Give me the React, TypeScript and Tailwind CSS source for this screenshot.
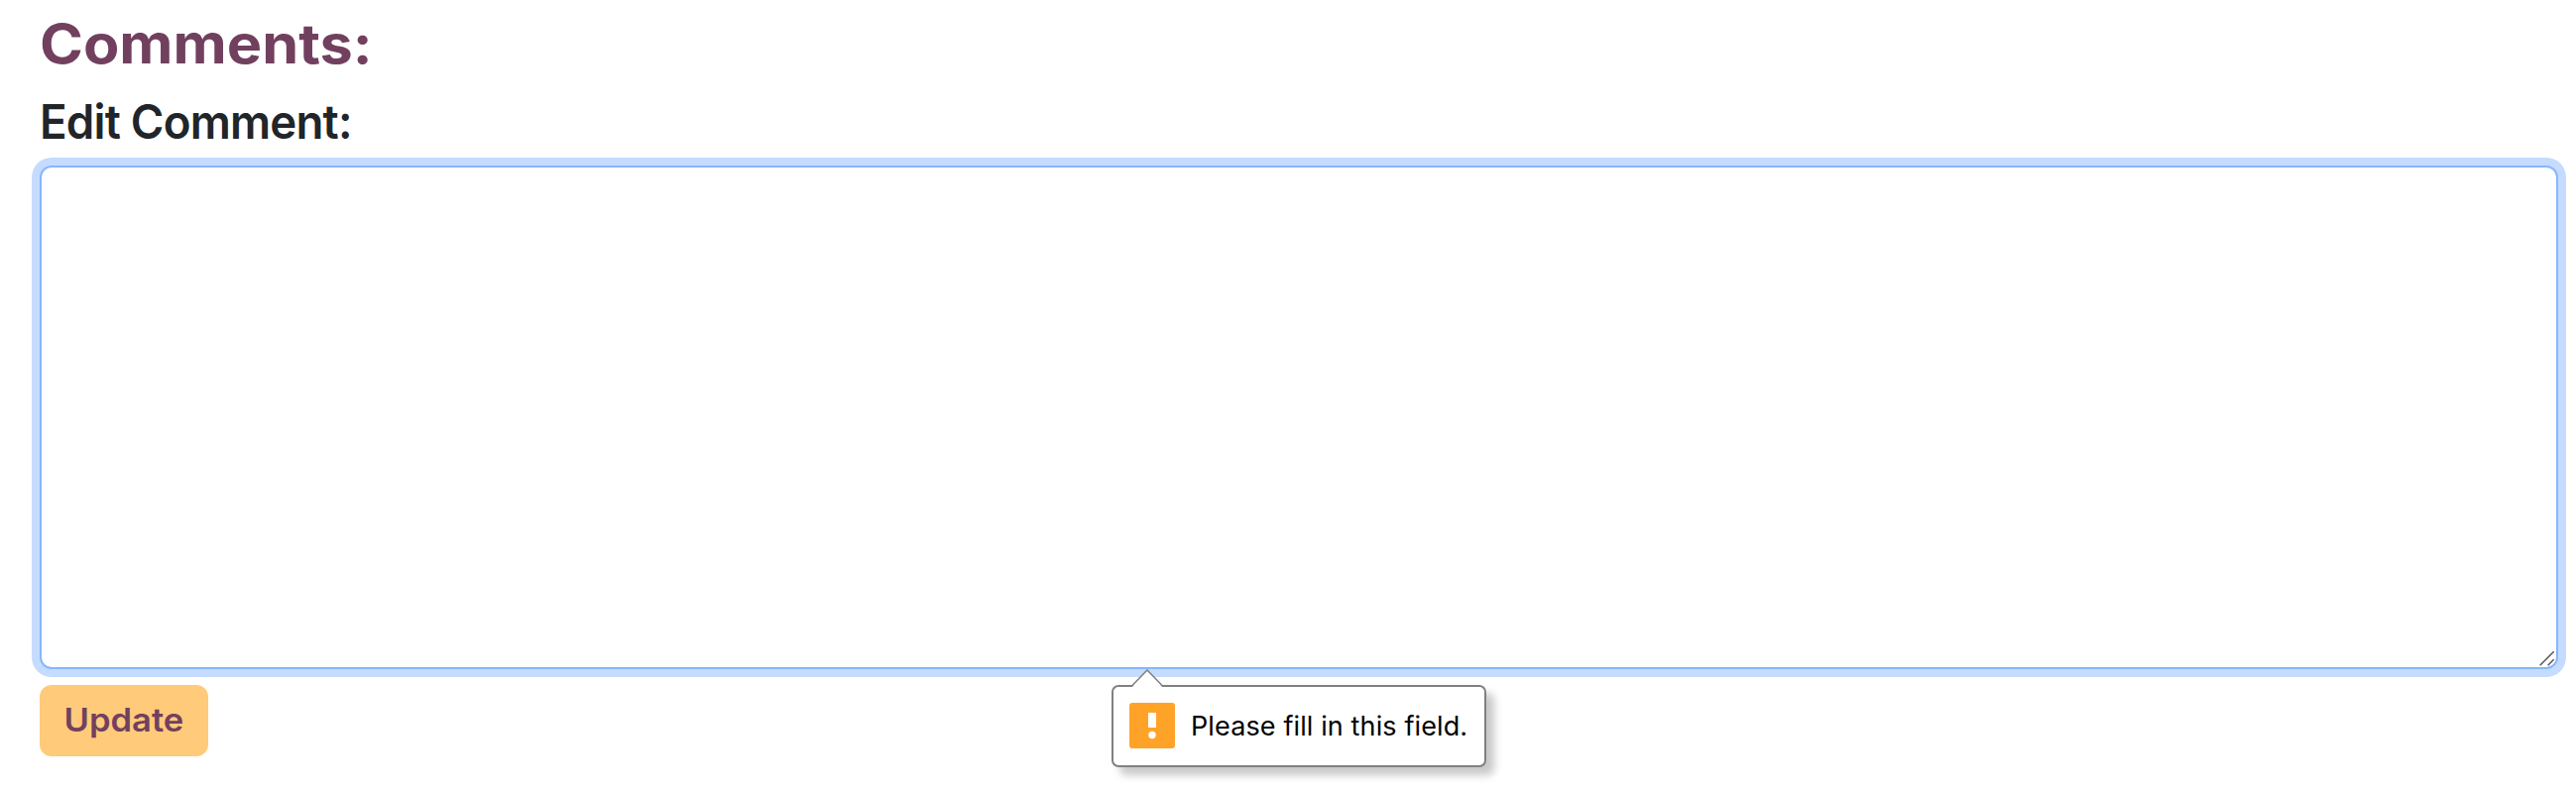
export default function App() {
  return (
    <main className="h-[800px] w-full overflow-hidden bg-white pl-10 pr-[18px] pt-[10px] font-['Inter','Liberation_Sans',sans-serif]">
      <h2 className="h-[81px] whitespace-nowrap text-[55px] font-bold leading-[69px] text-[#72405f]">
        <span className="inline-block origin-left scale-x-[1.08]">Comments:</span>
      </h2>
      <form onSubmit={(e) => e.preventDefault()}>
        <label htmlFor="comment" className="block h-[76px] whitespace-nowrap text-[48px] font-semibold leading-[64px] tracking-[-0.8px] text-[#212529]">
          <span className="inline-block origin-left scale-x-[0.95]">Edit Comment:</span>
        </label>
        <div className="relative h-[508px]">
          <textarea
            id="comment"
            required
            className="block h-full w-full resize-none rounded-xl border-2 border-[#86b7fe] bg-white p-6 text-[32px] shadow-[0_0_0_8px_#c5dbff] outline-none"
          />
          <svg className="absolute bottom-[2px] right-[3px] h-4 w-4" viewBox="0 0 16 16" fill="none" stroke="#555" strokeWidth="1.5">
            <path d="M.7 14.3 14.7.3M8.7 14.3l6-6" />
          </svg>
          <div
            role="alert"
            className="absolute left-[1081px] top-[524px] flex h-[83px] w-[378px] items-center rounded-[7px] border-2 border-[#808080] bg-white pb-px pl-4 shadow-[8px_8px_8px_rgba(0,0,0,0.22)]"
          >
            <svg className="absolute -top-[18px] left-[17px] h-[19px] w-9" viewBox="0 0 36 19">
              <path d="M1 19 17 1l16 18Z" fill="#fff" />
              <path d="M1 17.5 17 1l16 16.5" fill="none" stroke="#808080" strokeWidth="1.5" />
            </svg>
            <svg className="h-[46px] w-[46px] shrink-0" viewBox="0 0 46 46">
              <rect width="46" height="46" rx="3" fill="#ffa328" />
              <path d="M19 10h8v15h-8Z" fill="#fff" />
              <circle cx="23" cy="32.5" r="3.7" fill="#fff" />
            </svg>
            <span className="ml-4 whitespace-nowrap pt-0.5 text-[27px] tracking-[0.12px] text-black">Please fill in this field.</span>
          </div>
        </div>
        <button type="submit" className="mt-4 flex h-[72px] w-[170px] items-center justify-center rounded-xl bg-[#ffca7a] text-[32px] font-semibold text-[#72405f]">
          <span className="inline-block scale-x-[1.08]">Update</span>
        </button>
      </form>
    </main>
  );
}
